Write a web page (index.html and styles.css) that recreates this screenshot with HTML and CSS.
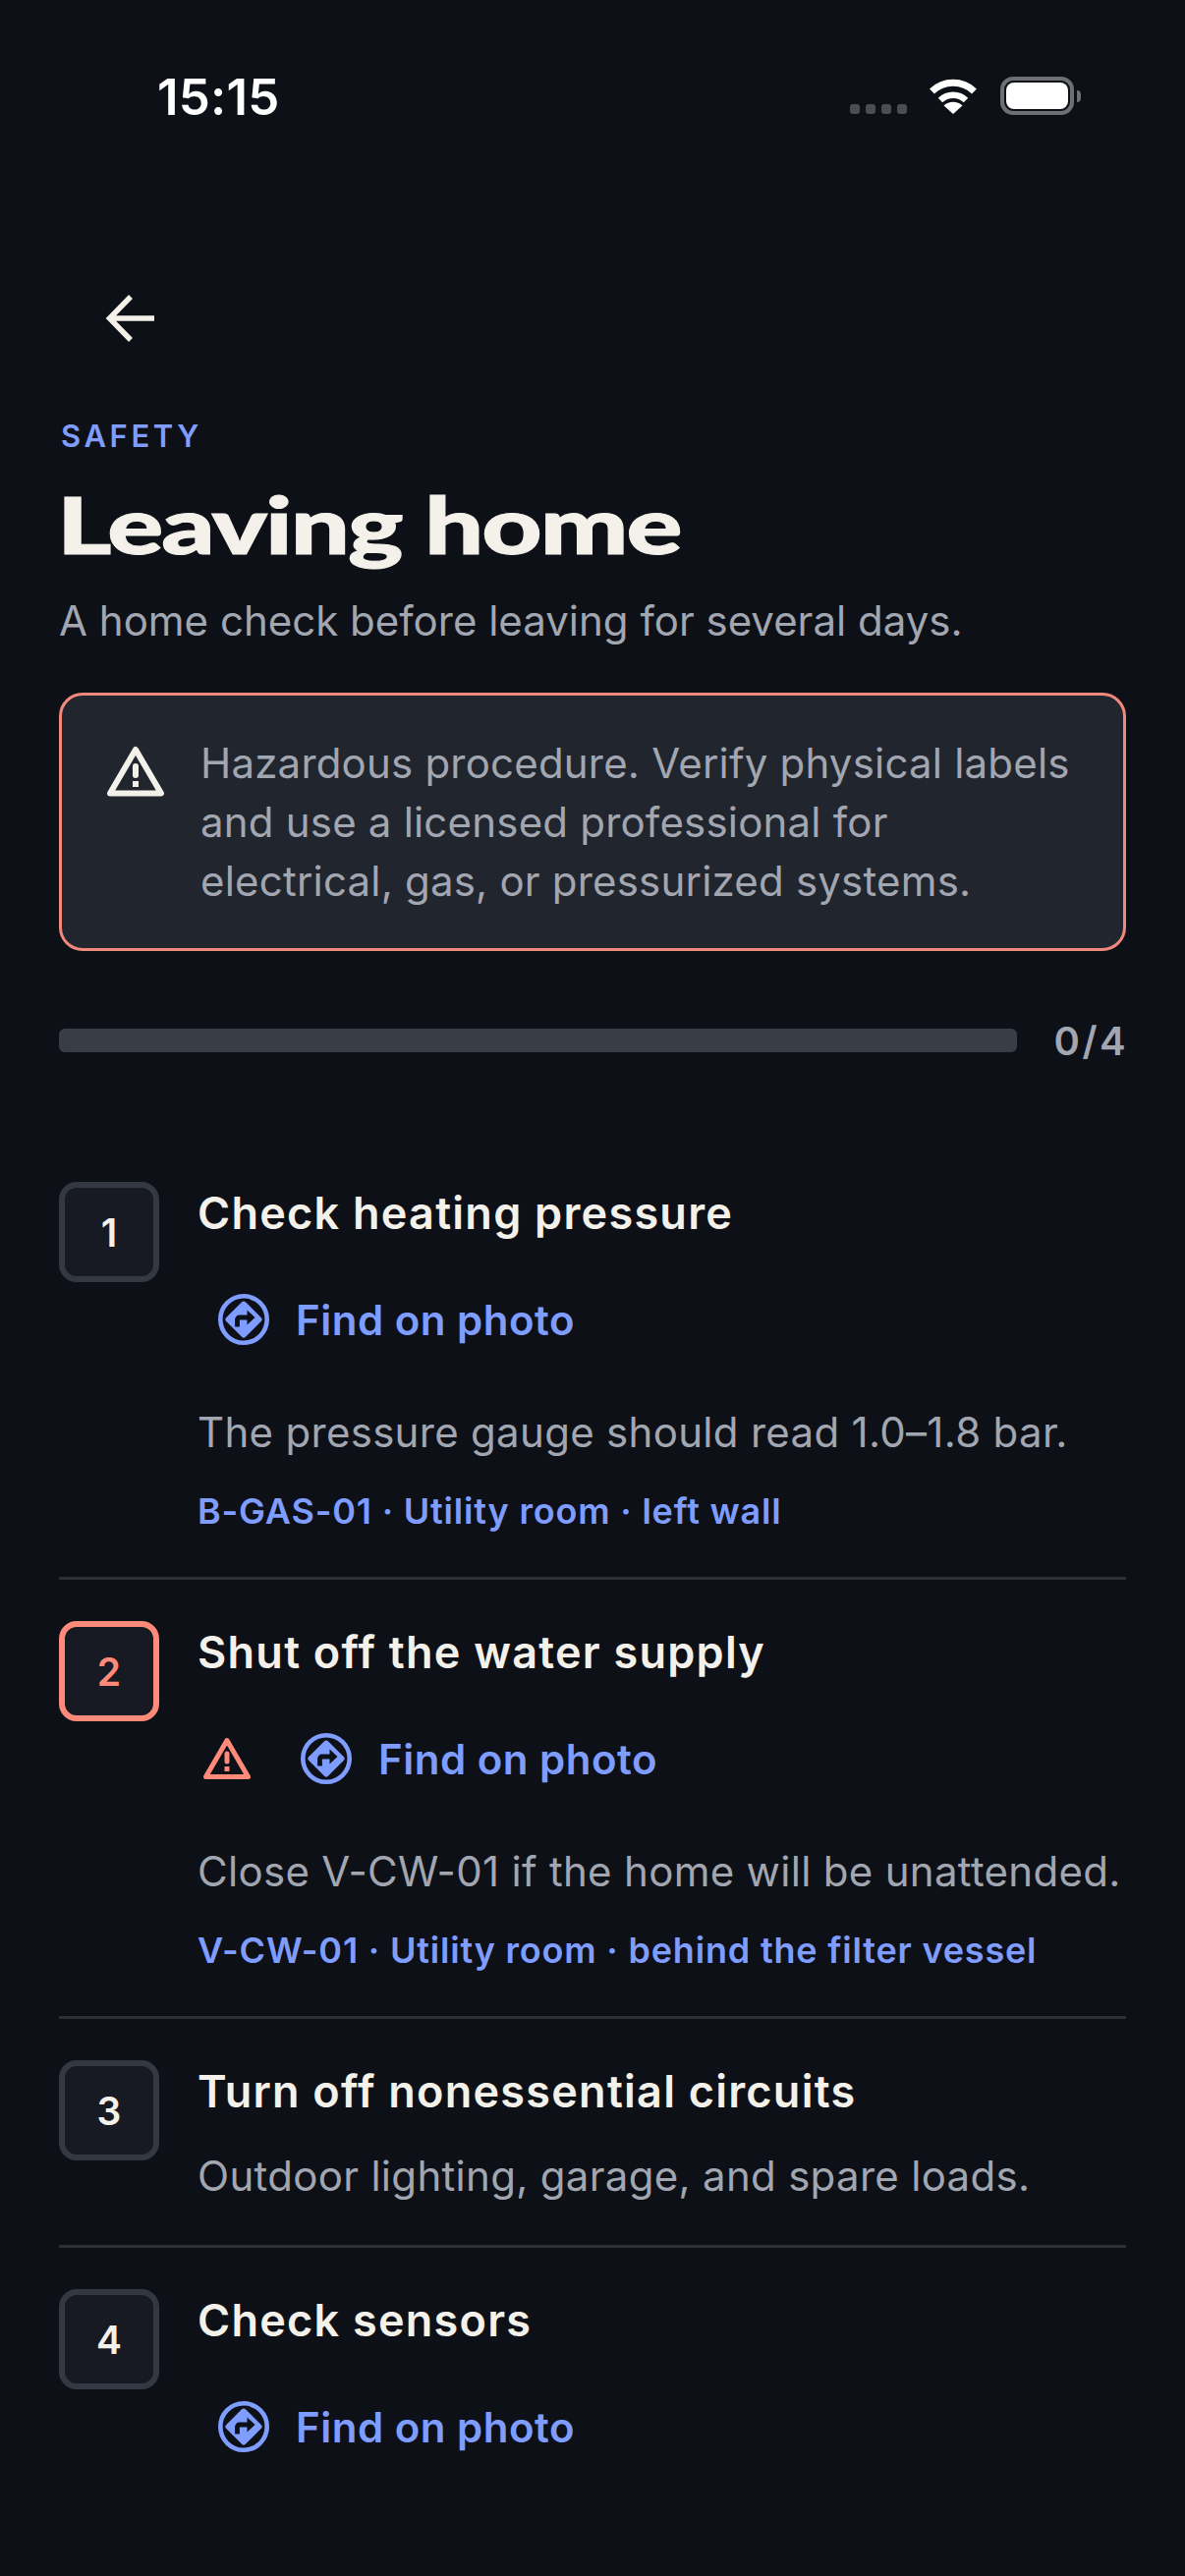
FILE: index.html
```html
<!DOCTYPE html>
<html lang="en">
<head>
<meta charset="utf-8">
<title>Leaving home</title>
<link rel="stylesheet" href="styles.css">
</head>
<body>
<svg class="defs" width="0" height="0" aria-hidden="true">
  <symbol id="route" viewBox="0 0 52 52">
    <circle cx="26" cy="26" r="23.7" fill="none" stroke="#7f9cff" stroke-width="4.6"/>
    <path d="M26 7.5a2.6 2.6 0 0 1 1.9.8L43.7 24a2.8 2.8 0 0 1 0 4L27.9 43.7a2.7 2.7 0 0 1-3.8 0L8.3 28a2.8 2.8 0 0 1 0-4L24.1 8.300a2.600 2.600 0 0 1 1.900-.8z" fill="#7f9cff"/>
    <path d="M19.500 33.500V26a2 2 0 0 1 2-2h9" fill="none" stroke="#0d1016" stroke-width="4.800"/>
    <path d="M29.500 16.500L37.500 24l-8 7.500z" fill="#0d1016"/>
  </symbol>
</svg>

<header class="status">
  <span class="time">15:15</span>
  <div class="status-icons">
    <div class="dots"><i></i><i></i><i></i><i></i></div>
    <svg class="wifi" width="50" height="38" viewBox="0 0 50 38">
      <path d="M3.500 15A31 31 0 0 1 46.500 15" fill="none" stroke="#fff" stroke-width="7"/>
      <path d="M12 24A19 19 0 0 1 38 24" fill="none" stroke="#fff" stroke-width="6.500"/>
      <path d="M25 38L15.500 29.500A14 14 0 0 1 34.500 29.500z" fill="#fff"/>
    </svg>
    <div class="battery"><div class="battery-body"><div class="battery-fill"></div></div><div class="battery-tip"></div></div>
  </div>
</header>

<main class="page">
  <button class="back" aria-label="Back">
    <svg width="52" height="52" viewBox="0 0 52 52"><path d="M50 26H5M26 4L4.500 26 26 48" fill="none" stroke="#f4f1ea" stroke-width="5.500"/></svg>
  </button>
  <div class="eyebrow">SAFETY</div>
  <h1 class="title">Leaving home</h1>
  <p class="subtitle">A home check before leaving for several days.</p>

  <div class="hazard">
    <svg class="hazard-icon" width="58" height="52" viewBox="0 0 58 52">
      <path d="M29 4L55 48.500H3z" fill="none" stroke="#f4f1ea" stroke-width="6" stroke-linejoin="round"/>
      <path d="M29 21v9" stroke="#f4f1ea" stroke-width="6" stroke-linecap="round"/>
      <rect x="26" y="36" width="6" height="6" fill="#f4f1ea"/>
    </svg>
    <p class="hazard-text">Hazardous procedure. Verify physical labels and use a licensed professional for electrical, gas, or pressurized systems.</p>
  </div>

  <div class="progress">
    <div class="track"></div>
    <span class="count">0/4</span>
  </div>

  <ol class="steps">
    <li class="step">
      <div class="num">1</div>
      <div class="body">
        <h2 class="step-title">Check heating pressure</h2>
        <div class="actions">
          <a class="find"><svg width="52" height="52"><use href="#route"/></svg><span>Find on photo</span></a>
        </div>
        <p class="desc">The pressure gauge should read 1.0–1.8 bar.</p>
        <p class="meta">B-GAS-01 · Utility room · left wall</p>
      </div>
    </li>
    <li class="step">
      <div class="num num-warn">2</div>
      <div class="body">
        <h2 class="step-title">Shut off the water supply</h2>
        <div class="actions actions-warn">
          <svg class="warn" width="48" height="44" viewBox="0 0 48 44">
            <path d="M24 3.500L45.500 40.500H2.500z" fill="none" stroke="#ff8a7a" stroke-width="5" stroke-linejoin="round"/>
            <path d="M24 17v8" stroke="#ff8a7a" stroke-width="5" stroke-linecap="round"/>
            <rect x="21.500" y="30" width="5" height="5" fill="#ff8a7a"/>
          </svg>
          <a class="find"><svg width="52" height="52"><use href="#route"/></svg><span>Find on photo</span></a>
        </div>
        <p class="desc">Close V-CW-01 if the home will be unattended.</p>
        <p class="meta">V-CW-01 · Utility room · behind the filter vessel</p>
      </div>
    </li>
    <li class="step">
      <div class="num">3</div>
      <div class="body">
        <h2 class="step-title">Turn off nonessential circuits</h2>
        <p class="desc desc-tight">Outdoor lighting, garage, and spare loads.</p>
      </div>
    </li>
    <li class="step step-last">
      <div class="num">4</div>
      <div class="body">
        <h2 class="step-title">Check sensors</h2>
        <div class="actions">
          <a class="find"><svg width="52" height="52"><use href="#route"/></svg><span>Find on photo</span></a>
        </div>
      </div>
    </li>
  </ol>
</main>
</body>
</html>
```

FILE: styles.css
```css
* { box-sizing: border-box; }
html, body { margin: 0; padding: 0; }
body {
  width: 1206px;
  height: 2622px;
  overflow: hidden;
  background: #0d1016;
  color: #f4f1ea;
  font-family: Inter, "Liberation Sans", sans-serif;
}
.defs { position: absolute; }

.status {
  height: 180px;
  padding: 73px 106px 0 160px;
  display: flex;
  justify-content: space-between;
  align-items: flex-start;
}
.time {
  font-size: 51px;
  line-height: 52px;
  font-weight: 600;
  color: #fff;
  letter-spacing: 0.2px;
}
.status-icons {
  display: flex;
  align-items: flex-start;
  padding-top: 5px;
}
.dots { display: flex; gap: 6px; margin-top: 28px; margin-right: 22px; }
.dots i { display: block; width: 10px; height: 10px; border-radius: 3px; background: #4a4d52; }
.wifi { margin-right: 23px; }
.battery { display: flex; align-items: center; height: 39px; }
.battery-body {
  width: 75px;
  height: 39px;
  border: 4px solid #6f7073;
  border-radius: 13px;
  padding: 2px;
}
.battery-fill { width: 100%; height: 100%; border-radius: 8px; background: #fff; }
.battery-tip { width: 4px; height: 12px; margin-left: 3px; border-radius: 0 4px 4px 0; background: #6f7073; }

.page { padding: 0 60px; }

.back {
  display: flex;
  align-items: center;
  justify-content: center;
  width: 132px;
  height: 132px;
  margin: 78px 0 30px 0;
  padding: 0 0 0 14px;
  border: 0;
  background: none;
}
.eyebrow {
  height: 48px;
  font-size: 31px;
  line-height: 48px;
  font-weight: 600;
  letter-spacing: 3.6px;
  color: #7f9cff;
  margin-left: 2px;
}
.title {
  width: max-content;
  height: 96px;
  margin: 17px 0 0 -2px;
  font-family: Lato, "DejaVu Sans", sans-serif;
  font-size: 80px;
  line-height: 96px;
  font-weight: 900;
  letter-spacing: -1.5px;
  color: #f4f1ea;
  -webkit-text-stroke: 1px #f4f1ea;
  transform: scaleX(1.33);
  transform-origin: left center;
}
.subtitle {
  margin: 21px 0 0;
  font-size: 42px;
  line-height: 60px;
  color: #a1a6b0;
}
.hazard {
  display: flex;
  gap: 37px;
  margin-top: 43px;
  height: 263px;
  padding: 39px 40px 0 46px;
  background: #21252e;
  border: 3px solid #f0897c;
  border-radius: 24px;
}
.hazard-icon { flex: none; margin-top: 12px; }
.hazard-text {
  margin: 0;
  font-size: 42px;
  line-height: 60px;
  letter-spacing: 0.2px;
  color: #a1a6b0;
}
.progress {
  display: flex;
  align-items: center;
  gap: 38px;
  margin-top: 67px;
  height: 48px;
}
.track { flex: 1; height: 24px; border-radius: 6px; background: #383d46; }
.count {
  font-size: 40px;
  font-weight: 600;
  letter-spacing: 2.4px;
  margin-right: -2px;
  color: #a1a6b0;
}
.steps { list-style: none; margin: 78px 0 0; padding: 0; }
.step {
  display: flex;
  gap: 39px;
  padding: 42px 0 40px;
  border-bottom: 3px solid #2c2f36;
}
.step-last { border-bottom: 0; }
.num {
  flex: none;
  display: flex;
  align-items: center;
  justify-content: center;
  width: 102px;
  height: 102px;
  border: 6px solid #343842;
  border-radius: 18px;
  background: #171a22;
  font-size: 39px;
  font-weight: 600;
  color: #f4f1ea;
}
.num-warn { border-color: #ff8a7a; color: #ff8a7a; }
.body { flex: 1; min-width: 0; }
.step-title {
  margin: -1px 0 0;
  font-size: 45px;
  line-height: 66px;
  font-weight: 600;
  letter-spacing: 1.25px;
  color: #f4f1ea;
}
.actions {
  display: flex;
  align-items: center;
  height: 132px;
  margin-top: 9px;
  padding-left: 21px;
}
.actions-warn { padding-left: 6px; }
.warn { margin-right: 51px; }
.find {
  display: flex;
  align-items: center;
  gap: 27px;
  font-size: 42px;
  font-weight: 600;
  letter-spacing: 0.5px;
  color: #7f9cff;
}
.find svg { flex: none; }
.desc {
  margin: 19px 0 0;
  font-size: 42px;
  line-height: 60px;
  letter-spacing: 0.3px;
  color: #a1a6b0;
}
.desc-tight { margin-top: 23px; }
.meta {
  margin: 23px 0 0;
  font-size: 36px;
  line-height: 54px;
  font-weight: 600;
  letter-spacing: 0.8px;
  color: #7f9cff;
}
```
